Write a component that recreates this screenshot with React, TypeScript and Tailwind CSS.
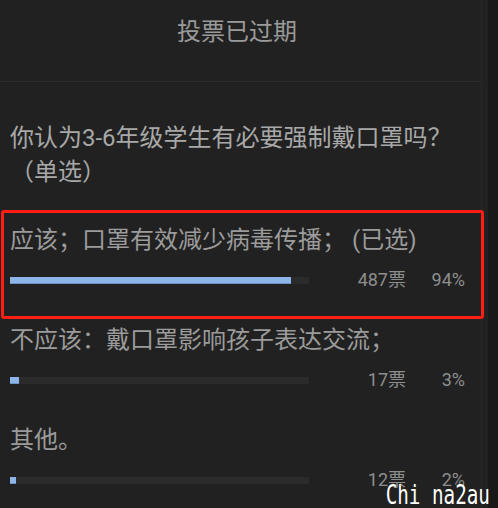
import React from 'react';

interface PollOption {
  label: string;
  votes: number;
  percent: number;
  selected?: boolean;
}

const options: PollOption[] = [
  { label: '应该；口罩有效减少病毒传播； (已选)', votes: 487, percent: 94, selected: true },
  { label: '不应该：戴口罩影响孩子表达交流；', votes: 17, percent: 3 },
  { label: '其他。', votes: 12, percent: 2 },
];

const OptionRow: React.FC<{ option: PollOption }> = ({ option }) => (
  <div className="relative h-[100px] pt-[8px]">
    {option.selected && (
      <div className="absolute -left-[9px] -top-[6px] w-[483px] h-[109px] border-[3px] border-[#ff1d14] rounded-[3px]" />
    )}
    <div className="text-[24px] leading-[32px] text-[#9b9b9b] whitespace-pre">
      {option.label}
    </div>
    <div className="mt-[12px] h-[24px] flex items-center">
      <div className="w-[299px] h-[7px] bg-[#2b2b2b]">
        <div
          className="h-full bg-[#8db5e9] border-b border-[#6f93c2]"
          style={{ width: `${option.percent}%` }}
        />
      </div>
      <span className="w-[97px] text-right text-[18px] leading-[24px] text-[#8e8e8e]">
        {option.votes}票
      </span>
      <span className="w-[59px] text-right text-[18px] leading-[24px] text-[#8e8e8e]">
        {option.percent}%
      </span>
    </div>
  </div>
);

export default function App() {
  return (
    <div
      className="relative w-[498px] h-[508px] overflow-hidden flex bg-[#212121]"
      style={{ fontFamily: 'Roboto, "Noto Sans CJK SC", sans-serif' }}
    >
      <div className="w-[488px] h-full">
        <div className="w-[482px] h-full border-r border-[#282828]">
          <div className="h-[82px] pt-[17px] pr-[7px] border-b border-[#2b2b2b] text-center text-[24px] leading-[30px] text-[#9a9a9a]">
            投票已过期
          </div>

          <div className="mt-[39px] px-[10px] text-[24px] leading-[34px] text-[#a8a8a8] whitespace-nowrap">
            你认为3-6年级学生有必要强制戴口罩吗？
            <br />
            （单选）
          </div>

          <div className="mt-[27px] px-[10px]">
            {options.map((o) => (
              <OptionRow key={o.label} option={o} />
            ))}
          </div>
        </div>
      </div>
      <div className="w-[10px] h-full bg-[#191919]" />

      <div
        className="absolute right-[8px] bottom-0 text-[26px] leading-[25px] text-white origin-right scale-x-[0.74] whitespace-pre"
        style={{ fontFamily: '"DejaVu Sans Mono", monospace' }}
      >
        Chi na2au
      </div>
    </div>
  );
}
